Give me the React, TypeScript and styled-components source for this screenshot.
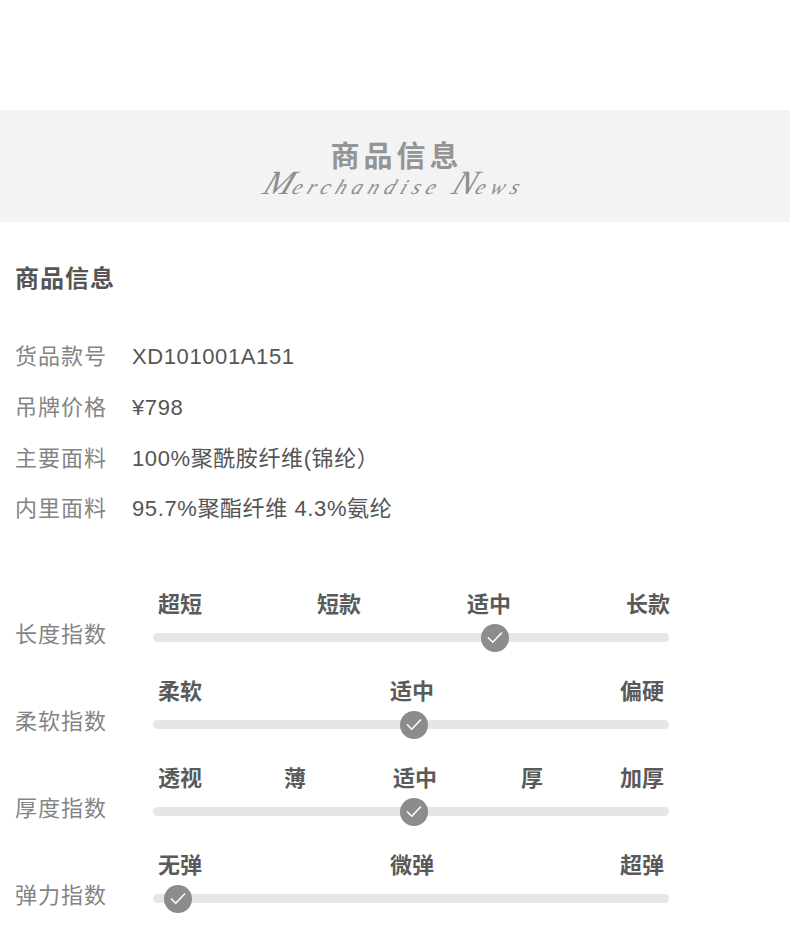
import React from "react";
import styled, { createGlobalStyle } from "styled-components";

const Global = createGlobalStyle`
  html, body { margin: 0; padding: 0; background: #fff; }
  body { font-family: "Liberation Sans", "Noto Sans CJK SC", sans-serif; }
`;

const Page = styled.main`
  width: 790px;
  height: 932px;
  overflow: hidden;
  padding-top: 110px;
  box-sizing: border-box;
`;

const Banner = styled.header`
  height: 112px;
  background: #f3f3f3;
  display: flex;
  flex-direction: column;
  align-items: center;
  padding-top: 28px;
  box-sizing: border-box;
  color: #8e8e8e;
`;

const BannerTitle = styled.h1`
  margin: 0;
  font-size: 29px;
  line-height: 38px;
  font-weight: 700;
  letter-spacing: 4px;
  margin-right: -3px;
  color: #949494;
`;

const BannerScript = styled.div`
  font-family: "Liberation Serif", serif;
  font-style: italic;
  font-size: 21px;
  line-height: 26px;
  margin-top: -6px;
  letter-spacing: 5.7px;
  white-space: nowrap;
  transform: skewX(-22deg);
`;

const Initial = styled.span`
  font-size: 34px;
  letter-spacing: 1px;
`;

const SectionTitle = styled.h2`
  margin: 42px 0 0 15px;
  font-size: 24px;
  line-height: 30px;
  font-weight: 700;
  letter-spacing: 1px;
  color: #555;
`;

const InfoList = styled.dl`
  margin: 38px 0 0;
  padding-left: 15px;
  display: grid;
  grid-template-columns: 117px 1fr;
  grid-auto-rows: 50.67px;
  align-items: center;
  font-size: 22px;
  line-height: 30px;
`;

const InfoLabel = styled.dt`
  color: #848484;
  letter-spacing: 1px;
  white-space: nowrap;
`;

const InfoValue = styled.dd`
  margin: 0;
  color: #555;
  letter-spacing: 0.6px;
  white-space: nowrap;
`;

const Scales = styled.section`
  margin-top: 55px;
  display: flex;
  flex-direction: column;
`;

const ScaleRow = styled.div`
  height: 87px;
  display: flex;
  padding-left: 15px;
  align-items: flex-start;
`;

const ScaleName = styled.div`
  width: 138px;
  flex: none;
  margin-top: 30px;
  font-size: 22px;
  line-height: 30px;
  letter-spacing: 1px;
  color: #848484;
`;

const ScaleBody = styled.div`
  width: 516px;
`;

const Ticks = styled.div`
  height: 30px;
  display: flex;
  white-space: nowrap;
`;

const Tick = styled.span<{ $gap: number }>`
  margin-left: ${(p) => p.$gap}px;
  font-size: 22px;
  line-height: 30px;
  font-weight: 700;
  color: #5a5a5a;
`;

const Track = styled.div`
  position: relative;
  margin-top: 13.4px;
  height: 9px;
  border-radius: 5px;
  background: #e6e6e6;
`;

const Knob = styled.div<{ $x: number }>`
  position: absolute;
  left: ${(p) => p.$x}px;
  top: -9.5px;
  width: 28px;
  height: 28px;
  margin-left: -14px;
  border-radius: 50%;
  background: #8c8c8c;
  display: flex;
  align-items: center;
  justify-content: center;
`;

const Check = () => (
  <svg width="16" height="13" viewBox="0 0 16 13" fill="none">
    <path d="M1 6.5 L5.8 11.2 L15 1.5" stroke="#fff" strokeWidth="1.6" />
  </svg>
);

const info = [
  ["货品款号", "XD101001A151"],
  ["吊牌价格", "¥798"],
  ["主要面料", "100%聚酰胺纤维(锦纶）"],
  ["内里面料", "95.7%聚酯纤维 4.3%氨纶"],
];

const scales = [
  { name: "长度指数", knob: 341.5, ticks: [["超短", 5], ["短款", 115], ["适中", 106], ["长款", 115]] },
  { name: "柔软指数", knob: 260.5, ticks: [["柔软", 5], ["适中", 188], ["偏硬", 186]] },
  { name: "厚度指数", knob: 260.5, ticks: [["透视", 5], ["薄", 82], ["适中", 87], ["厚", 84], ["加厚", 77]] },
  { name: "弹力指数", knob: 24.5, ticks: [["无弹", 5], ["微弹", 188], ["超弹", 186]] },
];

export default function App() {
  return (
    <Page>
      <Global />
      <Banner>
        <BannerTitle>商品信息</BannerTitle>
        <BannerScript>
          <Initial>M</Initial>erchandise <Initial>N</Initial>ews
        </BannerScript>
      </Banner>
      <SectionTitle>商品信息</SectionTitle>
      <InfoList>
        {info.map(([k, v]) => (
          <React.Fragment key={k}>
            <InfoLabel>{k}</InfoLabel>
            <InfoValue>{v}</InfoValue>
          </React.Fragment>
        ))}
      </InfoList>
      <Scales>
        {scales.map((s) => (
          <ScaleRow key={s.name}>
            <ScaleName>{s.name}</ScaleName>
            <ScaleBody>
              <Ticks>
                {s.ticks.map(([t, g]) => (
                  <Tick key={t as string} $gap={g as number}>{t}</Tick>
                ))}
              </Ticks>
              <Track>
                <Knob $x={s.knob}><Check /></Knob>
              </Track>
            </ScaleBody>
          </ScaleRow>
        ))}
      </Scales>
    </Page>
  );
}
